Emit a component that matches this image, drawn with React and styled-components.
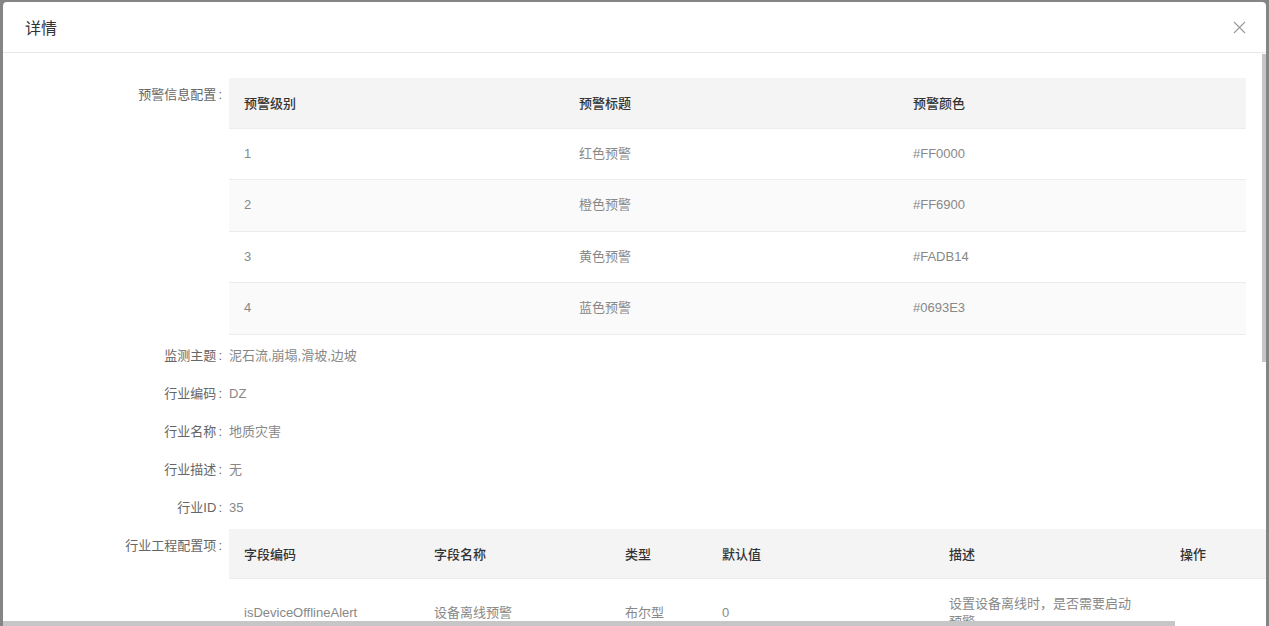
import React from "react";
import styled, { createGlobalStyle } from "styled-components";

const GlobalStyle = createGlobalStyle`
  html, body {
    margin: 0;
    padding: 0;
    background: #858585;
    overflow: hidden;
  }
  body {
    font-family: "Liberation Sans", "Noto Sans CJK SC", sans-serif;
    font-size: 13px;
  }
`;

const Backdrop = styled.div`
  height: 626px;
  box-sizing: border-box;
  padding: 2px 3px 0 3px;
  display: flex;
  background: #858585;
`;

const Modal = styled.div`
  flex: 1;
  min-width: 0;
  background: #fff;
  border-radius: 4px 4px 0 0;
  display: flex;
  flex-direction: column;
  overflow: hidden;
`;

const Header = styled.div`
  height: 50px;
  flex-shrink: 0;
  border-bottom: 1px solid #e9e9e9;
  display: flex;
  align-items: center;
  justify-content: space-between;
  padding: 0 20px 0 22px;
`;

const Title = styled.div`
  font-size: 16px;
  color: #333;
  font-family: "Noto Sans CJK SC", sans-serif;
`;

const CloseButton = styled.button`
  border: none;
  background: transparent;
  padding: 0;
  width: 14px;
  height: 14px;
  display: flex;
  align-items: center;
  justify-content: center;
  cursor: pointer;
`;

const BodyFrame = styled.div`
  position: relative;
  flex: 1;
  min-height: 0;
  overflow: hidden;
`;

const Body = styled.div`
  height: 100%;
  overflow: hidden;
`;

const VThumb = styled.div`
  position: absolute;
  right: 0;
  top: 1px;
  width: 4px;
  height: 308px;
  background: #c6c6c6;
`;

const HThumb = styled.div`
  position: absolute;
  left: 0;
  bottom: 0;
  width: 1172px;
  height: 5px;
  background: #c6c6c6;
`;

const Content = styled.div`
  width: 1358px;
  min-height: 1040px;
  padding-top: 25px;
  box-sizing: border-box;
`;

const FormItem = styled.div`
  display: flex;
  align-items: flex-start;
  margin-bottom: 4px;
`;

const Label = styled.div`
  width: 226px;
  flex-shrink: 0;
  box-sizing: border-box;
  padding-right: 7px;
  text-align: right;
  line-height: 34px;
  color: #666;
  white-space: nowrap;
  &::after {
    content: ":";
    margin-left: 2px;
  }
`;

const Value = styled.div`
  line-height: 34px;
  color: #888;
`;

const Table = styled.table`
  width: ${(p) => p.$width}px;
  border-collapse: collapse;
  table-layout: fixed;
  font-size: 13px;
`;

const Th = styled.th`
  height: 50px;
  box-sizing: border-box;
  padding: 0 15px;
  background: #f4f4f4;
  color: #333;
  font-weight: 500;
  text-align: left;
  border-bottom: 1px solid #ececec;
  font-family: "Noto Sans CJK SC", sans-serif;
`;

const Tr = styled.tr`
  background: ${(p) => (p.$striped ? "#fafafa" : "#fff")};
`;

const Td = styled.td`
  height: 51.5px;
  box-sizing: border-box;
  padding: 16px ${(p) => p.$padRight || 15}px 16px 15px;
  color: #888;
  line-height: 18px;
  text-align: left;
  vertical-align: middle;
  border-bottom: 1px solid #ececec;
`;

const warnCols = [335, 334, 348];
const warnRows = [
  ["1", "红色预警", "#FF0000"],
  ["2", "橙色预警", "#FF6900"],
  ["3", "黄色预警", "#FADB14"],
  ["4", "蓝色预警", "#0693E3"],
];

const fieldCols = [190, 191, 97, 227, 231, 184];
const fieldHead = ["字段编码", "字段名称", "类型", "默认值", "描述", "操作"];

const infoRows = [
  ["监测主题", "泥石流,崩塌,滑坡,边坡"],
  ["行业编码", "DZ"],
  ["行业名称", "地质灾害"],
  ["行业描述", "无"],
  ["行业ID", "35"],
];

function CloseIcon() {
  return (
    <svg width="13" height="13" viewBox="0 0 13 13">
      <path d="M1 1 L12 12 M12 1 L1 12" stroke="#999" strokeWidth="1.1" fill="none" />
    </svg>
  );
}

export default function App() {
  return (
    <>
      <GlobalStyle />
      <Backdrop>
        <Modal>
          <Header>
            <Title>详情</Title>
            <CloseButton aria-label="close">
              <CloseIcon />
            </CloseButton>
          </Header>
          <BodyFrame>
            <Body>
              <Content>
                <FormItem>
                  <Label>预警信息配置</Label>
                  <Table $width={1017}>
                    <colgroup>
                      {warnCols.map((w, i) => (
                        <col key={i} style={{ width: w }} />
                      ))}
                    </colgroup>
                    <thead>
                      <tr>
                        <Th>预警级别</Th>
                        <Th>预警标题</Th>
                        <Th>预警颜色</Th>
                      </tr>
                    </thead>
                    <tbody>
                      {warnRows.map((r, i) => (
                        <Tr key={i} $striped={i % 2 === 1}>
                          {r.map((c, j) => (
                            <Td key={j}>{c}</Td>
                          ))}
                        </Tr>
                      ))}
                    </tbody>
                  </Table>
                </FormItem>
                {infoRows.map(([k, v]) => (
                  <FormItem key={k}>
                    <Label>{k}</Label>
                    <Value>{v}</Value>
                  </FormItem>
                ))}
                <FormItem>
                  <Label>行业工程配置项</Label>
                  <Table $width={1120}>
                    <colgroup>
                      {fieldCols.map((w, i) => (
                        <col key={i} style={{ width: w }} />
                      ))}
                    </colgroup>
                    <thead>
                      <tr>
                        {fieldHead.map((h) => (
                          <Th key={h}>{h}</Th>
                        ))}
                      </tr>
                    </thead>
                    <tbody>
                      <Tr>
                        <Td>isDeviceOfflineAlert</Td>
                        <Td>设备离线预警</Td>
                        <Td>布尔型</Td>
                        <Td>0</Td>
                        <Td $padRight={30}>设置设备离线时，是否需要启动预警</Td>
                        <Td></Td>
                      </Tr>
                    </tbody>
                  </Table>
                </FormItem>
              </Content>
            </Body>
            <VThumb />
            <HThumb />
          </BodyFrame>
        </Modal>
      </Backdrop>
    </>
  );
}
